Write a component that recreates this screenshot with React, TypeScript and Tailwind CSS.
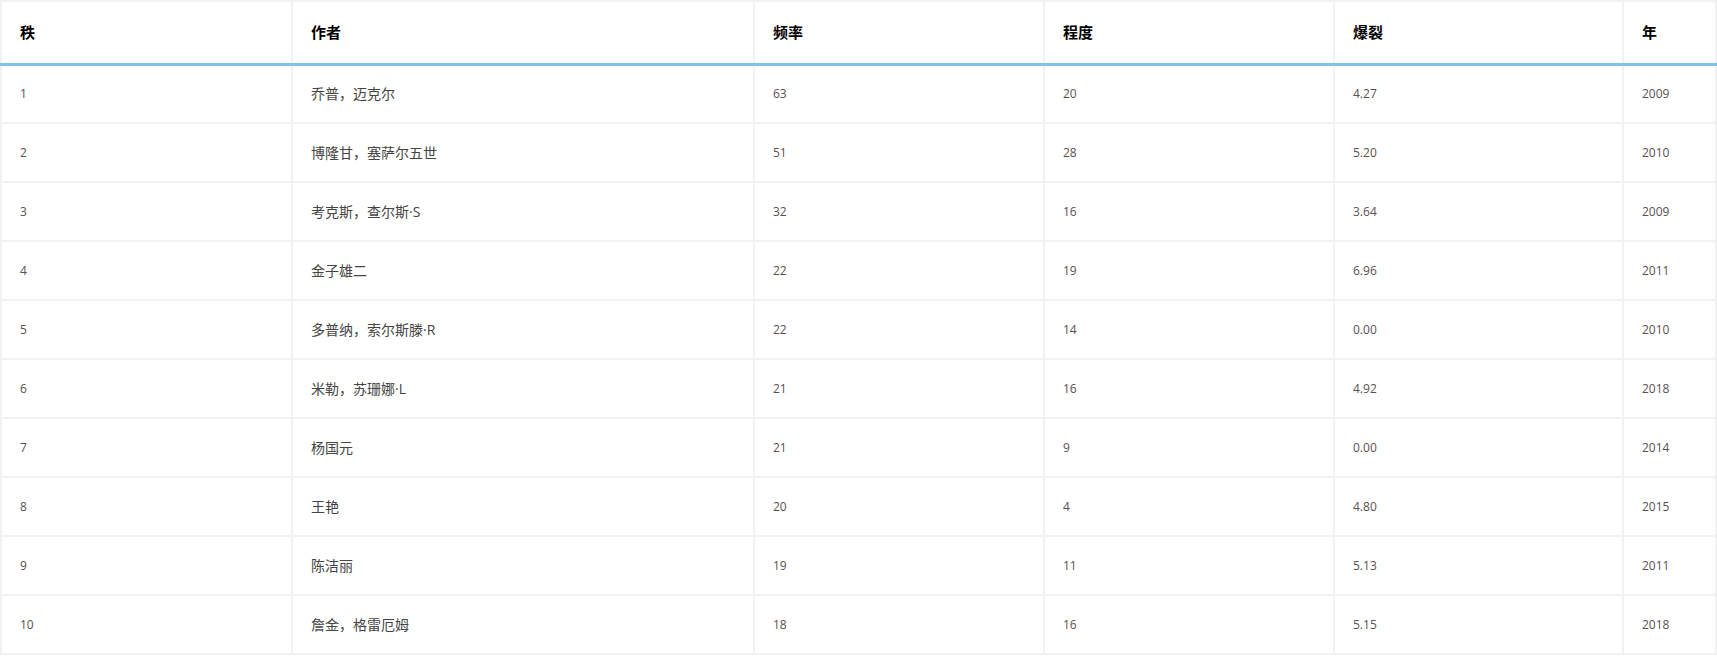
const rows = [
  ["1","乔普，迈克尔","63","20","4.27","2009"],
  ["2","博隆甘，塞萨尔五世","51","28","5.20","2010"],
  ["3","考克斯，查尔斯·S","32","16","3.64","2009"],
  ["4","金子雄二","22","19","6.96","2011"],
  ["5","多普纳，索尔斯滕·R","22","14","0.00","2010"],
  ["6","米勒，苏珊娜·L","21","16","4.92","2018"],
  ["7","杨国元","21","9","0.00","2014"],
  ["8","王艳","20","4","4.80","2015"],
  ["9","陈洁丽","19","11","5.13","2011"],
  ["10","詹金，格雷厄姆","18","16","5.15","2018"],
];
const heads = ["秩","作者","频率","程度","爆裂","年"];
const widths = ["w-[291px]","w-[462px]","w-[290px]","w-[290px]","w-[289px]",""];
export default function App() {
  return (
    <div className="w-[1717px] h-[656px] overflow-hidden bg-white" style={{fontFamily:'"Open Sans","Noto Sans CJK SC",sans-serif'}}>
      <table className="w-full border-collapse table-fixed">
        <thead>
          <tr className="h-[63px] border-b-[3px] border-b-[#7fc3ea]">
            {heads.map((h,i)=>(
              <th key={i} className={`${widths[i]} border-2 border-[#f2f2f2] border-b-[3px] border-b-[#7fc3ea] text-left pl-[18px] text-[15px] font-bold text-black`}>{h}</th>
            ))}
          </tr>
        </thead>
        <tbody>
          {rows.map((r,ri)=>(
            <tr key={ri} className="h-[59px]">
              {r.map((c,i)=>(
                <td key={i} className={`border-2 border-[#f2f2f2] pl-[18px] ${i===1?"text-[14px] text-[#444]":"text-[12px] text-[#5a5050]"}`}>{c}</td>
              ))}
            </tr>
          ))}
        </tbody>
      </table>
    </div>
  );
}
